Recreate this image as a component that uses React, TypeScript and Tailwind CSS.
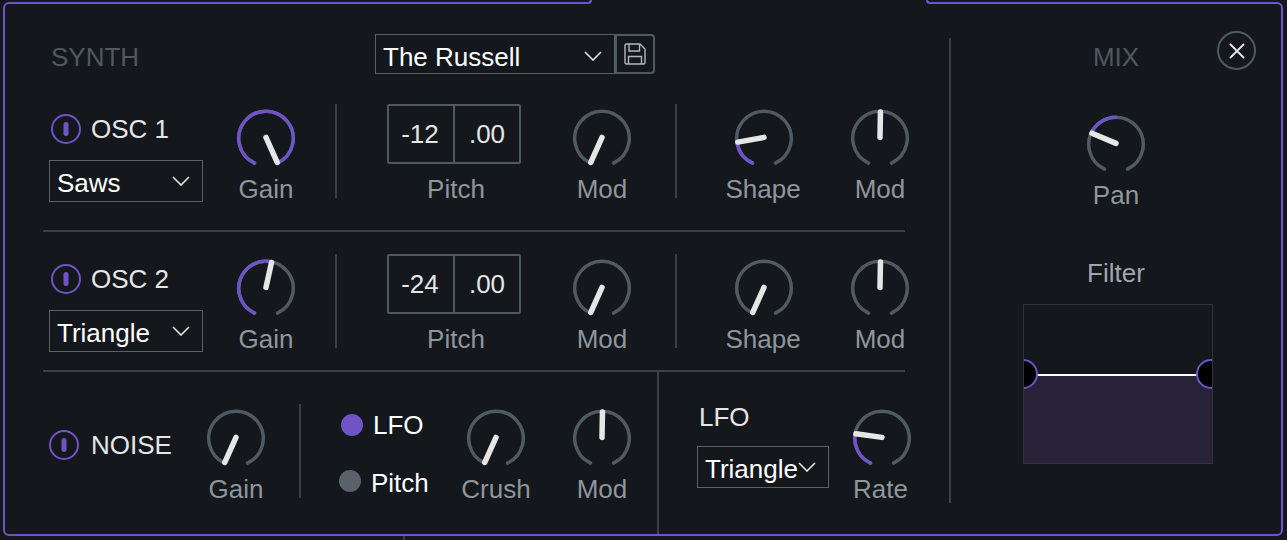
const CX = 30;
const R = 27.25;

function polar(deg: number, r = R) {
  const a = (deg * Math.PI) / 180;
  return { x: CX + r * Math.sin(a), y: CX - r * Math.cos(a) };
}

function arc(from: number, to: number) {
  const s = polar(from);
  const e = polar(to);
  return `M${s.x} ${s.y} A${R} ${R} 0 ${to - from > 180 ? 1 : 0} 1 ${e.x} ${e.y}`;
}

function Knob({ angle, from = -155, label, labelClass = '' }: { angle: number; from?: number; label: string; labelClass?: string }) {
  const tip = polar(angle, 26.5);
  const fillStart = Math.min(from, angle);
  const fillEnd = Math.max(from, angle);
  return (
    <div className="flex w-[60px] shrink-0 flex-col items-center">
      <svg width="60" height="60" viewBox="0 0.6 60 60" className="shrink-0">
        <path d={arc(-155, 155)} fill="none" stroke="#505a62" strokeWidth="3.5" strokeLinecap="round" />
        {fillEnd > fillStart && (
          <path d={arc(fillStart, fillEnd)} fill="none" stroke="#7054c6" strokeWidth="3.5" strokeLinecap="round" />
        )}
        <line x1={CX} y1={CX - 1} x2={tip.x} y2={tip.y} stroke="#e6e6e6" strokeWidth="5.5" strokeLinecap="round" />
      </svg>
      <span className={`mt-[5px] h-[30px] whitespace-nowrap leading-[30px] text-[#8f969c] ${labelClass}`}>{label}</span>
    </div>
  );
}

function Chevron() {
  return (
    <svg width="18" height="10" viewBox="0 0 18 10" className="shrink-0">
      <path d="M1 1 L9 9 L17 1" fill="none" stroke="#e6e6e6" strokeWidth="1.6" />
    </svg>
  );
}

function Select({ value, className, textClass = 'pt-[4px]' }: { value: string; className: string; textClass?: string }) {
  return (
    <div className={`flex items-center justify-between border border-[#5a6268] pl-[7px] pr-[12px] text-white ${className}`}>
      <span className={`whitespace-nowrap leading-[30px] ${textClass}`}>{value}</span>
      <Chevron />
    </div>
  );
}

function Power() {
  return (
    <svg width="30" height="30" viewBox="0 0 30 30" className="shrink-0">
      <circle cx="15" cy="15" r="14" fill="none" stroke="#7054c6" strokeWidth="2" />
      <rect x="12.5" y="8" width="5" height="14" rx="2.5" fill="#7054c6" />
    </svg>
  );
}

function VLine() {
  return <div className="h-[94px] w-[2px] shrink-0 bg-[#3a4048]" />;
}

function OscRow({ name, wave, gain, semis, shape }: { name: string; wave: string; gain: number; semis: string; shape: number }) {
  return (
    <div className="flex h-[94px] items-start">
      <div className="flex w-[193px] shrink-0 flex-col pl-[6px] pt-[10px]">
        <div className="ml-[2px] flex h-[30px] items-center gap-[10px] text-[#e6e6e6]">
          <Power />
          <span>{name}</span>
        </div>
        <Select value={wave} className="mt-[16px] h-[42px] w-[154px]" />
      </div>
      <div className="pt-[5px]">
        <Knob angle={gain} label="Gain" />
      </div>
      <div className="ml-[39px]">
        <VLine />
      </div>
      <div className="ml-[50px] flex w-[134px] shrink-0 flex-col items-center">
        <div className="flex h-[60px] w-full rounded-[2px] border-2 border-[#505860] text-[#e6e6e6]">
          <div className="flex w-[66px] items-center justify-center border-r-2 border-[#505860]">
            <span className="-translate-x-[1px]">{semis}</span>
          </div>
          <div className="flex flex-1 items-center justify-center">.00</div>
        </div>
        <span className="mt-[10px] h-[30px] pl-[4px] leading-[30px] text-[#8f969c]">Pitch</span>
      </div>
      <div className="ml-[51px] pt-[5px]">
        <Knob angle={-155} label="Mod" />
      </div>
      <div className="ml-[43px]">
        <VLine />
      </div>
      <div className="ml-[57px] pt-[5px]">
        <Knob angle={shape} label="Shape" labelClass="mr-[2px]" />
      </div>
      <div className="ml-[56px] pt-[5px]">
        <Knob angle={1} from={1} label="Mod" />
      </div>
    </div>
  );
}

function NoiseRow() {
  return (
    <div className="flex h-[162px] items-start">
      <div className="flex w-[163px] shrink-0 items-center gap-[12px] pl-[6px] pt-[58px] text-[#e6e6e6]">
        <Power />
        <span className="leading-[30px]">NOISE</span>
      </div>
      <div className="pt-[37px]">
        <Knob angle={-155} label="Gain" />
      </div>
      <div className="ml-[33px] mt-[32px]">
        <VLine />
      </div>
      <div className="ml-[38px] flex w-[127px] shrink-0 flex-col pt-[38px] text-white">
        <div className="flex h-[30px] items-center gap-[10px] pl-[2px]">
          <div className="h-[22px] w-[22px] rounded-full bg-[#7054c6]" />
          <span>LFO</span>
        </div>
        <div className="mt-[28px] flex h-[30px] items-center gap-[10px]">
          <div className="h-[22px] w-[22px] -translate-y-[2px] rounded-full bg-[#59626a]" />
          <span>Pitch</span>
        </div>
      </div>
      <div className="pt-[37px]">
        <Knob angle={-155} label="Crush" />
      </div>
      <div className="ml-[46px] pt-[37px]">
        <Knob angle={1} from={1} label="Mod" />
      </div>
      <div className="ml-[25px] h-full w-[2px] shrink-0 bg-[#3a4048]" />
      <div className="ml-[38px] flex shrink-0 flex-col pt-[30px]">
        <span className="ml-[2px] h-[30px] leading-[30px] text-[#e6e6e6]">LFO</span>
        <Select value="Triangle" className="mt-[14px] h-[42px] w-[132px]" />
      </div>
      <div className="ml-[23px] pt-[37px]">
        <Knob angle={-80} label="Rate" labelClass="mr-[3px]" />
      </div>
    </div>
  );
}

export default function App() {
  return (
    <div className="relative h-[540px] w-[1287px] overflow-hidden bg-[#14171c] pb-[4px] pl-[3px] pr-[4px] pt-[2px] font-['Liberation_Sans',sans-serif] text-[26px]">
      <div className="absolute left-[403px] top-[536px] h-[4px] w-[2px] bg-[#3a4048]" />
      <div className="relative flex h-full rounded-[6px] border-2 border-[#7054c6]">
        {/* notch in the top border */}
        <div className="absolute left-[580px] top-[-4px] h-[4px] w-[349px] bg-[#14171c]" />
        <div className="absolute left-[575px] top-[-4px] h-[4px] w-[12px] rounded-br-[6px] border-b-2 border-r-2 border-[#7054c6]" />
        <div className="absolute left-[921px] top-[-4px] h-[4px] w-[12px] rounded-bl-[6px] border-b-2 border-l-2 border-[#7054c6]" />

        {/* synth */}
        <div className="ml-[38px] flex w-[862px] shrink-0 flex-col pt-[30px]">
          <div className="flex h-[40px] items-center">
            <span className="w-[332px] shrink-0 pl-[8px] pt-[6px] leading-[30px] text-[#505860]">SYNTH</span>
            <Select value="The Russell" className="h-[40px] w-[240px] pt-[4px]" textClass="pt-[2px]" />
            <div className="flex h-[40px] w-[40px] items-center justify-center rounded-r-[4px] border-2 border-[#505860]">
              <svg width="22" height="22" viewBox="0 0 22 22" fill="none" stroke="#b4b8bc" strokeWidth="1.4">
                <path d="M2.5 1 H16 L21 6 V19.5 A1.5 1.5 0 0 1 19.5 21 H2.5 A1.5 1.5 0 0 1 1 19.5 V2.5 A1.5 1.5 0 0 1 2.5 1 Z" />
                <path d="M5 1 V8 H15.5 V1.5" />
                <path d="M4.5 21 V13.5 H17.5 V21" />
              </svg>
            </div>
          </div>
          <div className="mt-[30px]">
            <OscRow name="OSC 1" wave="Saws" gain={155} semis="-12" shape={-98} />
          </div>
          <div className="mt-[32px] h-[2px] w-full bg-[#3a4048]" />
          <div className="mt-[22px]">
            <OscRow name="OSC 2" wave="Triangle" gain={12} semis="-24" shape={-155} />
          </div>
          <div className="mt-[22px] h-[2px] w-full bg-[#3a4048]" />
          <NoiseRow />
        </div>

        <div className="ml-[44px] mt-[34px] h-[465px] w-[2px] shrink-0 bg-[#3a4048]" />

        {/* mix */}
        <div className="relative flex flex-1 flex-col items-center pt-[38px]">
          <span className="h-[30px] leading-[30px] text-[#505860]">MIX</span>
          <div className="mt-[43px]">
            <Knob angle={-65} from={0} label="Pan" />
          </div>
          <span className="mt-[48px] h-[30px] leading-[30px] text-[#a0a6ac]">Filter</span>
          <div className="ml-[4px] mt-[16px] h-[160px] w-[190px] border border-[#2e343a]">
            <svg width="188" height="158" viewBox="0 0 188 158" className="block">
              <rect x="0" y="70" width="188" height="88" fill="#272238" />
              <line x1="0" y1="70" x2="188" y2="70" stroke="#ffffff" strokeWidth="2" />
              <circle cx="-1" cy="69" r="14" fill="#000000" stroke="#7054c6" strokeWidth="2" />
              <circle cx="187" cy="69" r="14" fill="#000000" stroke="#7054c6" strokeWidth="2" />
            </svg>
          </div>
          <div className="absolute left-[266px] top-[27px] flex h-[39px] w-[39px] items-center justify-center rounded-full border-2 border-[#505860]">
            <svg width="16" height="16" viewBox="0 0 16 16">
              <path d="M1 1 L15 15 M15 1 L1 15" stroke="#e6e6e6" strokeWidth="1.8" />
            </svg>
          </div>
        </div>
      </div>
    </div>
  );
}
